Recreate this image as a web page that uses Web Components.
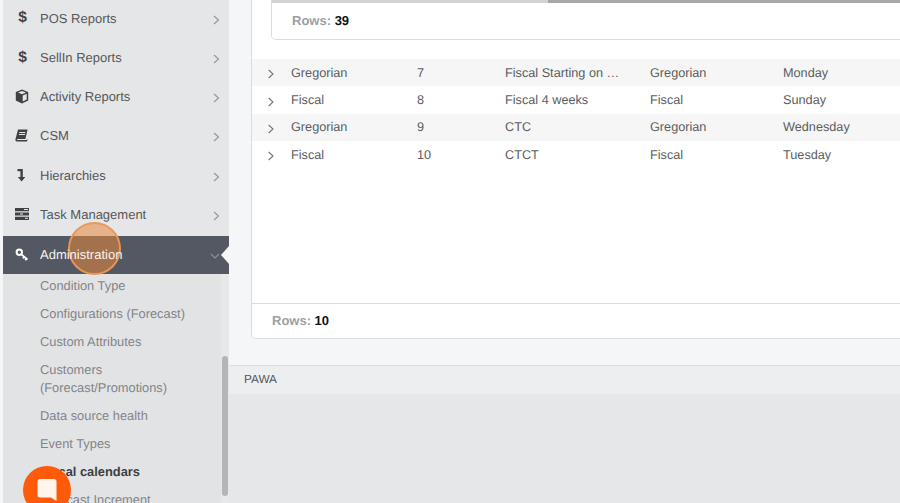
<!DOCTYPE html>
<html>
<head>
<meta charset="utf-8">
<title>Fiscal calendars</title>
<style>
  html, body { margin: 0; padding: 0; height: 503px; overflow: hidden; background: #f5f6f8; }
  body { font-family: "Liberation Sans", Arial, sans-serif; text-rendering: geometricPrecision; }
</style>
</head>
<body>
<app-shell>
  <side-nav slot="side">
    <nav-item label="POS Reports" icon="dollar"></nav-item>
    <nav-item label="SellIn Reports" icon="dollar"></nav-item>
    <nav-item label="Activity Reports" icon="cube"></nav-item>
    <nav-item label="CSM" icon="book"></nav-item>
    <nav-item label="Hierarchies" icon="level"></nav-item>
    <nav-item label="Task Management" icon="tasks"></nav-item>
    <nav-item label="Administration" icon="key" active></nav-item>
    <sub-menu>
      <sub-item>Condition Type</sub-item>
      <sub-item>Configurations (Forecast)</sub-item>
      <sub-item>Custom Attributes</sub-item>
      <sub-item>Customers (Forecast/Promotions)</sub-item>
      <sub-item>Data source health</sub-item>
      <sub-item>Event Types</sub-item>
      <sub-item current>Fiscal calendars</sub-item>
      <sub-item>Forecast Increment</sub-item>
    </sub-menu>
  </side-nav>
  <data-panel>
    <rows-card count="39"></rows-card>
    <calendar-row type="Gregorian" num="7" name="Fiscal Starting on …" base="Gregorian" day="Monday" shaded></calendar-row>
    <calendar-row type="Fiscal" num="8" name="Fiscal 4 weeks" base="Fiscal" day="Sunday"></calendar-row>
    <calendar-row type="Gregorian" num="9" name="CTC" base="Gregorian" day="Wednesday" shaded></calendar-row>
    <calendar-row type="Fiscal" num="10" name="CTCT" base="Fiscal" day="Tuesday"></calendar-row>
    <rows-footer slot="footer" count="10"></rows-footer>
  </data-panel>
  <page-footer>PAWA</page-footer>
</app-shell>
<click-marker></click-marker>
<chat-launcher></chat-launcher>

<script>
const icons = {
  dollar: `<span class="dollar">$</span>`,
  cube: `<svg width="14" height="15" viewBox="0 0 14 15"><path fill="#3f4145" d="M7 .5 13.2 3v8.4L7 14.5.8 11.4V3z"/><path fill="#e5e6e8" d="M7 2 11 3.6 7 5.2 3 3.6zM7.7 6.4l4-1.6v5.7l-4 2z"/></svg>`,
  book: `<svg width="13" height="13" viewBox="0 0 13 13"><path fill="#3f4145" d="M3 .5h9.6L10.4 10H2.6c-.8 0-1 .9-.3 1h9.4l.3-.9.6.5-.6 2H1.8C.6 12.6.2 11.3.5 10z"/><path fill="#e5e6e8" d="M4.3 3h6v.9h-6zM4 5h6v.9H4z"/></svg>`,
  level: `<svg width="9" height="14" viewBox="0 0 9 14"><path fill="#3f4145" d="M.5 1h5.3v8h2.5l-3.7 4.5L.9 9h2.5V3.2H.5z"/></svg>`,
  tasks: `<svg width="14" height="12" viewBox="0 0 14 12"><path fill="#3f4145" d="M0 0h14v3.2H0zM0 4.4h14v3.2H0zM0 8.8h14V12H0z"/><path fill="#e5e6e8" d="M9 1h4v1H9zM5 5.4h3v1H5zM10 9.8h3v1h-3z"/></svg>`,
  key: `<svg width="14" height="14" viewBox="0 0 14 14"><circle cx="4.3" cy="4.3" r="2.7" fill="none" stroke="#fff" stroke-width="2"/><path d="M6.5 6.5l6 5M9.3 8.900l-1.400 1.500M11.500 10.700l-1.300 1.500" fill="none" stroke="#fff" stroke-width="1.7"/></svg>`
};

class AppShell extends HTMLElement {
  constructor() {
    super();
    this.attachShadow({ mode: 'open' }).innerHTML = `
      <style>
        :host { display: flex; height: 503px; overflow: hidden; padding-left: 3px; box-sizing: border-box; }
        .main { flex: 1; min-width: 0; display: flex; flex-direction: column; }
      </style>
      <slot name="side"></slot>
      <div class="main"><slot></slot></div>`;
  }
}

class SideNav extends HTMLElement {
  constructor() {
    super();
    this.attachShadow({ mode: 'open' }).innerHTML = `
      <style>
        :host { display: flow-root; flex: none; width: 226px; height: 503px; background: #e5e6e8; overflow: hidden; }
        .inner { margin-top: -1.2px; }
      </style>
      <div class="inner"><slot></slot></div>`;
  }
}

class NavItem extends HTMLElement {
  constructor() {
    super();
    const active = this.hasAttribute('active');
    this.attachShadow({ mode: 'open' }).innerHTML = `
      <style>
        :host { display: flex; align-items: center; height: ${active ? 38 : 39.2}px; position: relative;
          font-size: 13px; color: ${active ? '#f8f3ee' : '#55575a'}; background: ${active ? '#535862' : 'none'}; }
        :host([active]) { margin-top: 1.8px; }
        :host([active]) .label { position: relative; z-index: 2; }
        .ic { width: 37px; flex: none; display: flex; justify-content: center; box-sizing: border-box; }
        .dollar { font-weight: 700; font-size: 15.5px; color: #3f4145; margin-left: 2px; }
        .label { flex: 1; }
        .chev { width: 18px; flex: none; display: flex; padding-top: 3px; }
        .tip { position: absolute; right: 0; top: 10px; width: 0; height: 0; border: 9px solid transparent; border-left: 0; border-right: 8px solid #f5f6f8; }
      </style>
      <span class="ic">${icons[this.getAttribute('icon')]}</span>
      <span class="label">${this.getAttribute('label')}</span>
      <span class="chev">${active
        ? `<svg width="10" height="8" viewBox="0 0 10 8" style="margin-left:-1px"><path d="M1 2l4 4 4-4" fill="none" stroke="#8d929a" stroke-width="1.2"/></svg>`
        : `<svg width="7" height="10" viewBox="0 0 7 10" style="margin-left:2px"><path d="M1 1l4.500 4L1 9" fill="none" stroke="#96989b" stroke-width="1.2"/></svg>`}</span>
      ${active ? '<span class="tip"></span>' : ''}`;
  }
}

class SubMenu extends HTMLElement {
  constructor() {
    super();
    this.attachShadow({ mode: 'open' }).innerHTML = `
      <style>
        :host { display: flow-root; position: relative; height: 240px; background: #e2e3e5; }
        .list { margin-top: -2px; }
        .track { position: absolute; right: 0; top: 0; bottom: 0; width: 8px; background: #e7e8ea; }
        .thumb { position: absolute; right: 1px; top: 82px; width: 6px; height: 140px; border-radius: 3px; background: #b4b5b7; }
      </style>
      <div class="list"><slot></slot></div>
      <span class="track"></span><span class="thumb"></span>`;
  }
}

class SubItem extends HTMLElement {
  constructor() {
    super();
    this.attachShadow({ mode: 'open' }).innerHTML = `
      <style>
        :host { display: block; padding: 5px 30px 5px 37px; font-size: 12.85px; line-height: 18px; color: #828487; }
        :host([current]) { font-weight: 700; color: #3c3e42; }
      </style>
      <slot></slot>`;
  }
}

class DataPanel extends HTMLElement {
  constructor() {
    super();
    this.attachShadow({ mode: 'open' }).innerHTML = `
      <style>
        :host { display: flex; flex-direction: column; flex: none; box-sizing: border-box; height: 339px; margin: 0 -20px 26px 22px;
          background: #fff; border: 1px solid #dcdde0; border-top: 0; border-radius: 0 0 0 5px; }
        .body { flex: 1; }
      </style>
      <div class="body"><slot></slot></div>
      <slot name="footer"></slot>`;
  }
}

class RowsCard extends HTMLElement {
  constructor() {
    super();
    this.attachShadow({ mode: 'open' }).innerHTML = `
      <style>
        :host { display: block; box-sizing: border-box; height: 40px; margin: 0 0 19px 19px; background: #fff;
          border: 1px solid #dcdde0; border-top: 0; border-radius: 0 0 0 5px; font-size: 13px; font-weight: 700; color: #9c9ea1; }
        .tabs { display: flex; height: 3px; }
        .tabs i { display: block; width: 276px; background: #d2d4d2; }
        .tabs b { display: block; flex: 1; background: #a6a7a9; }
        .txt { padding: 10px 0 0 20px; line-height: 15px; }
        strong { color: #111; }
      </style>
      <div class="tabs"><i></i><b></b></div>
      <div class="txt">Rows: <strong>${this.getAttribute('count')}</strong></div>`;
  }
}

class CalendarRow extends HTMLElement {
  constructor() {
    super();
    const a = n => this.getAttribute(n);
    this.attachShadow({ mode: 'open' }).innerHTML = `
      <style>
        :host { display: grid; grid-template-columns: 39px 126px 88px 145px 133px 1fr; align-items: center; height: 27.4px;
          font-size: 12.7px; color: #5b5d60; }
        :host([shaded]) { background: #f6f6f6; }
        svg { display: block; margin: 3px 0 0 16px; }
      </style>
      <svg width="6" height="10" viewBox="0 0 6 10"><path d="M.7 1l4.300 4-4.300 4" fill="none" stroke="#74767a" stroke-width="1.1"/></svg>
      <span>${a('type')}</span><span>${a('num')}</span><span>${a('name')}</span><span>${a('base')}</span><span>${a('day')}</span>`;
  }
}

class RowsFooter extends HTMLElement {
  constructor() {
    super();
    this.attachShadow({ mode: 'open' }).innerHTML = `
      <style>
        :host { display: flex; align-items: center; height: 32px; padding: 0 0 2px 20px; border-top: 1px solid #dcdde0;
          font-size: 13px; font-weight: 700; color: #9c9ea1; }
        strong { color: #111; margin-left: 3.6px; }
      </style>
      Rows: <strong>${this.getAttribute('count')}</strong>`;
  }
}

class PageFooter extends HTMLElement {
  constructor() {
    super();
    this.attachShadow({ mode: 'open' }).innerHTML = `
      <style>
        :host { display: block; box-sizing: border-box; flex: none; height: 30px; padding: 6px 0 0 15px;
          background: #edeef0; border-top: 1px solid #dcdde0; font-size: 11.8px; line-height: 14px; color: #55575a; }
        .rest { position: absolute; left: 229px; right: 0; top: 394px; bottom: 0; background: #e6e7e9; }
      </style>
      <slot></slot><span class="rest"></span>`;
  }
}

class ClickMarker extends HTMLElement {
  constructor() {
    super();
    this.attachShadow({ mode: 'open' }).innerHTML = `
      <style>
        :host { position: absolute; z-index: 1; left: 68px; top: 222px; width: 53px; height: 53px; box-sizing: border-box; border-radius: 50%;
          background: rgba(232, 135, 60, .55); border: 2px solid rgba(236, 150, 85, .95); }
      </style>`;
  }
}

class ChatLauncher extends HTMLElement {
  constructor() {
    super();
    this.attachShadow({ mode: 'open' }).innerHTML = `
      <style>
        :host { position: absolute; z-index: 3; left: 23px; top: 466px; width: 48px; height: 48px; border-radius: 50%; background: #ff5a0a;
          display: flex; align-items: center; justify-content: center; }
        svg { display: block; margin: 0 0 1px 0; }
      </style>
      <svg width="20" height="24" viewBox="0 0 20 24"><path fill="#fff5ec" d="M3 1h14a2.500 2.500 0 0 1 2.500 2.500V23L14 19.500H3A2.500 2.500 0 0 1 .5 17V3.500A2.500 2.500 0 0 1 3 1z"/></svg>`;
  }
}

customElements.define('app-shell', AppShell);
customElements.define('side-nav', SideNav);
customElements.define('nav-item', NavItem);
customElements.define('sub-menu', SubMenu);
customElements.define('sub-item', SubItem);
customElements.define('data-panel', DataPanel);
customElements.define('rows-card', RowsCard);
customElements.define('calendar-row', CalendarRow);
customElements.define('rows-footer', RowsFooter);
customElements.define('page-footer', PageFooter);
customElements.define('click-marker', ClickMarker);
customElements.define('chat-launcher', ChatLauncher);
</script>
</body>
</html>
